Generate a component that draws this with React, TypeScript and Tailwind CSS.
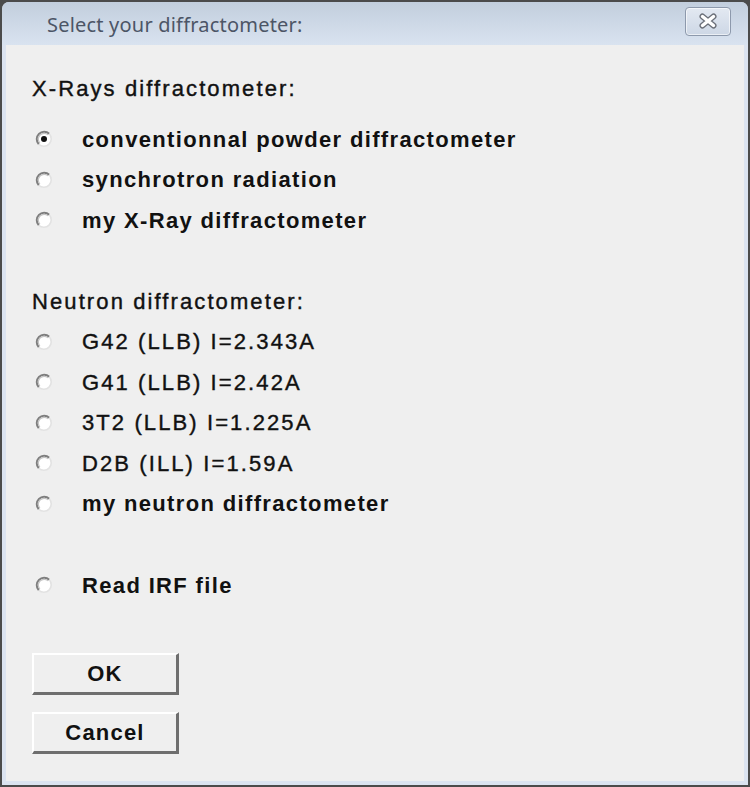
import React from "react";

function Radio({ checked }: { checked?: boolean }) {
  return (
    <svg width="18" height="18" viewBox="0 0 18 18" className="block shrink-0" style={{ width: 18, height: 18 }}>
      <circle cx="9" cy="9" r="7.4" fill="#ffffff" />
      <path d="M3.77 14.23 A7.4 7.4 0 0 1 14.23 3.77" fill="none" stroke="#7e7e7e" strokeWidth="2" />
      <path d="M4.9 13.1 A5.8 5.8 0 0 1 13.1 4.9" fill="none" stroke="#c4c4c4" strokeWidth="1.2" />
      <path d="M14.23 3.77 A7.4 7.4 0 0 1 3.77 14.23" fill="none" stroke="#e2e2e2" strokeWidth="1.6" />
      {checked && <circle cx="9" cy="9" r="3" fill="#111111" />}
    </svg>
  );
}

function Row({ label, checked, bold }: { label: string; checked?: boolean; bold?: boolean }) {
  return (
    <div className="flex h-[40.5px] items-center">
      <div className="ml-[3px] flex w-[47px] items-center">
        <Radio checked={checked} />
      </div>
      <span
        className={
          bold
            ? "whitespace-nowrap text-[22px] font-bold tracking-[1.35px] text-[#111]"
            : "whitespace-nowrap text-[22px] font-normal tracking-[2.1px] text-[#111] [-webkit-text-stroke:0.4px_#111]"
        }
      >
        {label}
      </span>
    </div>
  );
}

function Btn({ label }: { label: string }) {
  return (
    <div className="flex h-[42px] w-[147px] items-center justify-center border-t-2 border-l-2 border-r-[3px] border-b-[3px] border-t-white border-l-white border-r-[#6e6e6e] border-b-[#6e6e6e] bg-[#efefef] text-[22px] font-bold tracking-[1.2px] text-[#111]">
      {label}
    </div>
  );
}

export default function App() {
  return (
    <div
      className="relative h-[787px] w-[750px] overflow-hidden bg-[#4b4b4b]"
      style={{ fontFamily: '"Liberation Sans", Arial, sans-serif' }}
    >
      <div className="absolute inset-x-[2px] top-[2px] bottom-[2px] flex flex-col rounded-t-[7px] bg-[#dbe3f0]">
        {/* Title bar */}
        <div className="flex h-[43px] shrink-0 items-center justify-between rounded-t-[7px] bg-gradient-to-b from-[#c2cedd] to-[#d9e3f0] pl-[45px] pr-[17px]">
          <span
            className="mt-[3px] text-[20px] tracking-[0.2px] text-[#4c5566]"
            style={{ fontFamily: '"Noto Sans", "Open Sans", sans-serif' }}
          >
            Select your diffractometer:
          </span>
          <div className="mt-[-5px] flex h-[29px] w-[46px] items-center justify-center rounded-[4px] border border-[#8d99ac] bg-gradient-to-b from-[#e3e9f2] to-[#cdd7e5] shadow-[inset_0_0_0_1px_rgba(255,255,255,0.6)]">
            <svg width="24" height="16" viewBox="0 0 24 16">
              <path d="M6.5 3.5 L17.5 12.5 M17.5 3.5 L6.5 12.5" stroke="#6a6f78" strokeWidth="6" strokeLinecap="round" />
              <path d="M6.5 3.5 L17.5 12.5 M17.5 3.5 L6.5 12.5" stroke="#ffffff" strokeWidth="3.4" strokeLinecap="round" />
            </svg>
          </div>
        </div>
        {/* Client area */}
        <div className="mx-[4px] mb-[4px] flex flex-1 flex-col bg-[#efefef] pl-[26px]">
          <div className="mt-[22.75px] flex h-[40.5px] items-center text-[22px] tracking-[2.1px] text-[#111] [-webkit-text-stroke:0.4px_#111]">
            X-Rays diffractometer:
          </div>
          <div className="mt-[10.5px] flex flex-col">
            <Row label="conventionnal powder diffractometer" checked bold />
            <Row label="synchrotron radiation" bold />
            <Row label="my X-Ray diffractometer" bold />
          </div>
          <div className="mt-[40.5px] flex h-[40.5px] items-center text-[22px] tracking-[2.1px] text-[#111] [-webkit-text-stroke:0.4px_#111]">
            Neutron diffractometer:
          </div>
          <div className="flex flex-col">
            <Row label="G42 (LLB) I=2.343A" />
            <Row label="G41 (LLB) I=2.42A" />
            <Row label="3T2 (LLB) I=1.225A" />
            <Row label="D2B (ILL) I=1.59A" />
            <Row label="my neutron diffractometer" bold />
          </div>
          <div className="mt-[41px]">
            <Row label="Read IRF file" bold />
          </div>
          <div className="mt-[47.75px] flex flex-col gap-[17px]">
            <Btn label="OK" />
            <Btn label="Cancel" />
          </div>
        </div>
      </div>
    </div>
  );
}
